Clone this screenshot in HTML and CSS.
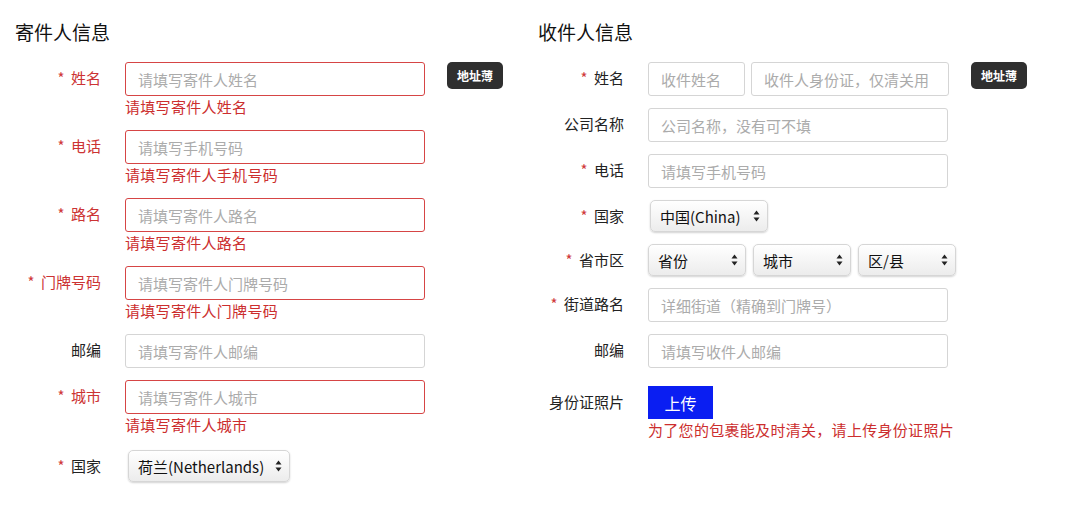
FILE: index.html
```html
<!DOCTYPE html>
<html>
	<head>
		<meta charset="utf-8">
		<title>寄件</title>
		<link rel="stylesheet" href="styles.css">
	</head>
	<body>
		<div class="page">
			<div class="panel">
				<h2 class="panel-title">寄件人信息</h2>

				<div class="row has-error">
					<label class="row-label"><span class="req">*</span> 姓名</label>
					<div class="row-field">
						<div class="line">
							<input class="text-input wide" type="text" placeholder="请填写寄件人姓名">
							<button class="btn-book">地址薄</button>
						</div>
						<div class="error-msg">请填写寄件人姓名</div>
					</div>
				</div>

				<div class="row has-error">
					<label class="row-label"><span class="req">*</span> 电话</label>
					<div class="row-field">
						<input class="text-input wide" type="text" placeholder="请填写手机号码">
						<div class="error-msg">请填写寄件人手机号码</div>
					</div>
				</div>

				<div class="row has-error">
					<label class="row-label"><span class="req">*</span> 路名</label>
					<div class="row-field">
						<input class="text-input wide" type="text" placeholder="请填写寄件人路名">
						<div class="error-msg">请填写寄件人路名</div>
					</div>
				</div>

				<div class="row has-error">
					<label class="row-label"><span class="req">*</span> 门牌号码</label>
					<div class="row-field">
						<input class="text-input wide" type="text" placeholder="请填写寄件人门牌号码">
						<div class="error-msg">请填写寄件人门牌号码</div>
					</div>
				</div>

				<div class="row">
					<label class="row-label">邮编</label>
					<div class="row-field">
						<input class="text-input wide" type="text" placeholder="请填写寄件人邮编">
					</div>
				</div>

				<div class="row has-error">
					<label class="row-label"><span class="req">*</span> 城市</label>
					<div class="row-field">
						<input class="text-input wide" type="text" placeholder="请填写寄件人城市">
						<div class="error-msg">请填写寄件人城市</div>
					</div>
				</div>

				<div class="row row-select row-country">
					<label class="row-label"><span class="req">*</span> 国家</label>
					<div class="row-field">
						<div class="select-box country-nl">
							<select class="select"><option>荷兰(Netherlands)</option></select>
							<svg class="select-arrow" width="7" height="12" viewBox="0 0 7 12"><path d="M3.5 0.5L6.5 4.5H0.5Z M3.5 11.5L6.5 7.5H0.5Z" fill="#222"/></svg>
						</div>
					</div>
				</div>
			</div>

			<div class="panel">
				<h2 class="panel-title">收件人信息</h2>

				<div class="row">
					<label class="row-label"><span class="req">*</span> 姓名</label>
					<div class="row-field">
						<div class="line">
							<input class="text-input short" type="text" placeholder="收件姓名">
							<input class="text-input id-input" type="text" placeholder="收件人身份证，仅清关用">
							<button class="btn-book">地址薄</button>
						</div>
					</div>
				</div>

				<div class="row">
					<label class="row-label">公司名称</label>
					<div class="row-field">
						<input class="text-input wide" type="text" placeholder="公司名称，没有可不填">
					</div>
				</div>

				<div class="row">
					<label class="row-label"><span class="req">*</span> 电话</label>
					<div class="row-field">
						<input class="text-input wide" type="text" placeholder="请填写手机号码">
					</div>
				</div>

				<div class="row row-select">
					<label class="row-label"><span class="req">*</span> 国家</label>
					<div class="row-field">
						<div class="select-box country-cn">
							<select class="select"><option>中国(China)</option></select>
							<svg class="select-arrow" width="7" height="12" viewBox="0 0 7 12"><path d="M3.5 0.5L6.5 4.5H0.5Z M3.5 11.5L6.5 7.5H0.5Z" fill="#222"/></svg>
						</div>
					</div>
				</div>

				<div class="row row-select">
					<label class="row-label"><span class="req">*</span> 省市区</label>
					<div class="row-field">
						<div class="line area">
							<div class="select-box area-box">
								<select class="select"><option>省份</option></select>
								<svg class="select-arrow" width="7" height="12" viewBox="0 0 7 12"><path d="M3.5 0.5L6.5 4.5H0.5Z M3.5 11.5L6.5 7.5H0.5Z" fill="#222"/></svg>
							</div>
							<div class="select-box area-box">
								<select class="select"><option>城市</option></select>
								<svg class="select-arrow" width="7" height="12" viewBox="0 0 7 12"><path d="M3.5 0.5L6.5 4.5H0.5Z M3.5 11.5L6.5 7.5H0.5Z" fill="#222"/></svg>
							</div>
							<div class="select-box area-box">
								<select class="select"><option>区/县</option></select>
								<svg class="select-arrow" width="7" height="12" viewBox="0 0 7 12"><path d="M3.5 0.5L6.5 4.5H0.5Z M3.5 11.5L6.5 7.5H0.5Z" fill="#222"/></svg>
							</div>
						</div>
					</div>
				</div>

				<div class="row">
					<label class="row-label"><span class="req">*</span> 街道路名</label>
					<div class="row-field">
						<input class="text-input wide" type="text" placeholder="详细街道（精确到门牌号）">
					</div>
				</div>

				<div class="row">
					<label class="row-label">邮编</label>
					<div class="row-field">
						<input class="text-input wide" type="text" placeholder="请填写收件人邮编">
					</div>
				</div>

				<div class="row row-upload">
					<label class="row-label">身份证照片</label>
					<div class="row-field">
						<button class="btn-upload">上传</button>
						<div class="error-msg">为了您的包裹能及时清关，请上传身份证照片</div>
					</div>
				</div>
			</div>
		</div>
	</body>
</html>
```

FILE: styles.css
```css
body {
	margin: 0;
	background: #fff;
	color: #222;
	font-family: "Noto Sans CJK SC", "Noto Sans", sans-serif;
	font-size: 15px;
}

.page {
	display: flex;
	padding: 18px 0 0 15px;
}

.panel {
	width: 523px;
}

.panel-title {
	margin: 0 0 16px;
	font-size: 19px;
	font-weight: normal;
	line-height: 28px;
	color: #111;
}

.row {
	display: flex;
	margin-bottom: 12px;
}

.row-label {
	width: 86px;
	margin-right: 24px;
	text-align: right;
	line-height: 31px;
	white-space: nowrap;
}

.req {
	margin-right: 3px;
	color: #d0393a;
}

.has-error .row-label {
	color: #cc3333;
}

.line {
	display: flex;
	align-items: flex-start;
}

.text-input {
	box-sizing: border-box;
	height: 34px;
	padding: 0 12px;
	border: 1px solid #d5d5d5;
	border-radius: 3px;
	font-family: inherit;
	font-size: 15px;
	color: #333;
	outline: none;
}

.text-input::placeholder {
	color: #ababab;
}

.has-error .text-input {
	border-color: #d64545;
}

.wide {
	width: 300px;
}

.short {
	width: 97px;
	margin-right: 6px;
}

.id-input {
	width: 198px;
}

.error-msg {
	line-height: 22px;
	letter-spacing: 0.3px;
	color: #cc2e2e;
}

.btn-book {
	height: 27px;
	margin-left: 22px;
	padding: 0 10px;
	border: none;
	border-radius: 5px;
	background: #2f2f2f;
	color: #fff;
	font-family: inherit;
	font-size: 12px;
	font-weight: bold;
}

.select-box {
	position: relative;
	display: inline-block;
}

.select {
	box-sizing: border-box;
	height: 32px;
	padding: 0 22px 0 9px;
	border: 1px solid #d6d6d6;
	border-radius: 5px;
	background: linear-gradient(#ffffff, #ececec);
	box-shadow: 0 1px 2px rgba(0, 0, 0, 0.18);
	font-family: inherit;
	font-size: 15px;
	color: #111;
	-webkit-appearance: none;
	appearance: none;
	outline: none;
}

.select-arrow {
	position: absolute;
	right: 8px;
	top: 10px;
	pointer-events: none;
}

.row-country {
	padding-top: 2px;
}

.country-nl {
	margin-left: 3px;
}

.country-nl .select {
	width: 162px;
}

.country-cn {
	margin-left: 2px;
}

.country-cn .select {
	width: 118px;
}

.area {
	gap: 7px;
}

.area-box .select {
	width: 98px;
}

.row-upload {
	padding-top: 6px;
}

.btn-upload {
	width: 65px;
	height: 33px;
	border: none;
	background: #0a1ef2;
	color: #fff;
	font-family: inherit;
	font-size: 16px;
}
```
